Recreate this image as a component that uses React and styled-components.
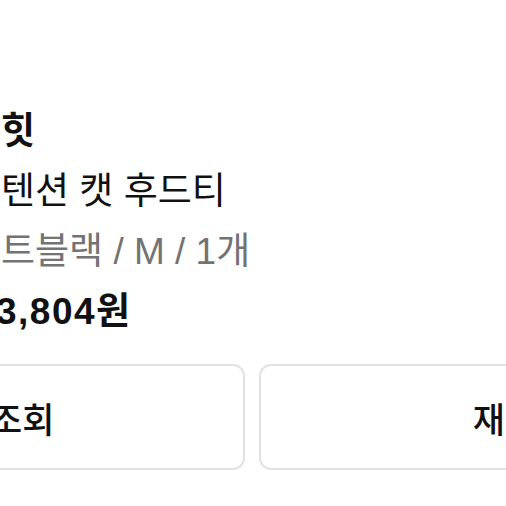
import React from 'react';
import styled, { createGlobalStyle } from 'styled-components';

const GlobalStyle = createGlobalStyle`
  html, body {
    margin: 0;
    padding: 0;
    background: #ffffff;
  }
  body {
    font-family: "Liberation Sans", "Noto Sans CJK KR", sans-serif;
  }
`;

const Viewport = styled.div`
  width: 506px;
  height: 506px;
  overflow: hidden;
  background: #fff;
`;

const Info = styled.div`
  display: flex;
  flex-direction: column;
  padding: 102px 0 0 1px;
`;

const Line = styled.div`
  height: 60px;
  line-height: 60px;
  font-size: 37px;
  font-weight: ${({ $bold }) => ($bold ? 700 : 400)};
  color: ${({ $muted }) => ($muted ? '#737373' : '#111111')};
  margin-left: ${({ $shift }) => $shift || 0}px;
  letter-spacing: ${({ $spacing }) => $spacing || 0}px;
  white-space: nowrap;
`;

const ButtonRow = styled.div`
  display: grid;
  grid-template-columns: 510px 510px;
  gap: 14px;
  margin: 22px 0 0 -265px;
`;

const ActionButton = styled.button`
  height: 106px;
  border: 2px solid #e2e2e2;
  border-radius: 12px;
  background: #fff;
  font-family: "Liberation Sans", "Noto Sans CJK KR", sans-serif;
  font-size: 35px;
  font-weight: 500;
  color: #111;
  padding: ${({ $nudge }) => ($nudge ? `0 0 0 ${$nudge}px` : 0)};
  white-space: nowrap;
`;

export default function App() {
  return (
    <Viewport>
      <GlobalStyle />
      <Info>
        <Line $bold>힛</Line>
        <Line>텐션 캣 후드티</Line>
        <Line $muted>트블랙 / M / 1개</Line>
        <Line $bold $shift={-5} $spacing={1.5}>3,804원</Line>
      </Info>
      <ButtonRow>
        <ActionButton>배송조회</ActionButton>
        <ActionButton $nudge={14}>재구매</ActionButton>
      </ButtonRow>
    </Viewport>
  );
}
